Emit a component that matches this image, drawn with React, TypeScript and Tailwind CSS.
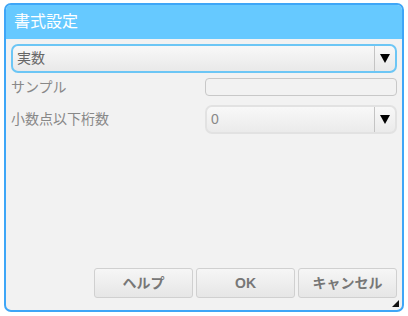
export default function App() {
  const font = { fontFamily: '"Liberation Sans", "Noto Sans CJK JP", sans-serif' };
  return (
    <div className="w-[408px] h-[316px] bg-white p-[3px_4px_4px_4px]" style={font}>
      <div className="relative flex h-full flex-col overflow-hidden rounded-[7px] border-2 border-[#3ea6f7] bg-[#f2f2f2]">
        <div className="flex h-[34px] shrink-0 items-center bg-[#66c9ff] pl-[8px] text-[16px] text-white">
          書式設定
        </div>
        <div className="flex flex-1 flex-col px-[5px] pt-[5px]">
          <div className="flex h-[29px] items-stretch rounded-[7px] border-2 border-[#6cc6f5] bg-gradient-to-b from-[#f8f8f8] to-[#e9e9e9]">
            <div className="flex flex-1 items-center pl-[4px] text-[14px] text-[#666]">実数</div>
            <div className="flex w-[21px] items-center justify-center border-l border-[#c4c4c4]">
              <svg width="10" height="9" viewBox="0 0 10 9">
                <polygon points="0,0 10,0 5,9" fill="#000" />
              </svg>
            </div>
          </div>
          <div className="mt-[4px] flex h-[20px] items-center">
            <div className="w-[194px] text-[14px] text-[#888]">サンプル</div>
            <div className="h-[18px] flex-1 rounded-[4px] border border-[#c8c8c8] bg-[#f2f2f2]" />
          </div>
          <div className="mt-[8px] flex h-[29px] items-center">
            <div className="w-[194px] text-[14px] text-[#888]">小数点以下桁数</div>
            <div className="flex h-full flex-1 items-stretch rounded-[7px] border-2 border-[#e2e2e2] bg-gradient-to-b from-[#f8f8f8] to-[#ebebeb]">
              <div className="flex flex-1 items-center pl-[4px] text-[14px] text-[#888]">0</div>
              <div className="flex w-[21px] items-center justify-center border-l border-[#c4c4c4]">
                <svg width="10" height="9" viewBox="0 0 10 9">
                  <polygon points="0,0 10,0 5,9" fill="#000" />
                </svg>
              </div>
            </div>
          </div>
          <div className="mt-auto mb-[12px] flex justify-end gap-[3px]">
            {['ヘルプ', 'OK', 'キャンセル'].map((t) => (
              <div
                key={t}
                className="flex h-[30px] w-[99px] items-center justify-center rounded-[3px] border border-[#d0d0d0] bg-gradient-to-b from-[#f6f6f6] to-[#e6e6e6] text-[14px] font-bold text-[#777]"
              >
                {t}
              </div>
            ))}
          </div>
        </div>
        <svg className="absolute bottom-[3px] right-[3px]" width="7" height="7" viewBox="0 0 7 7">
          <polygon points="7,0 7,7 0,7" fill="#111" />
        </svg>
      </div>
    </div>
  );
}
